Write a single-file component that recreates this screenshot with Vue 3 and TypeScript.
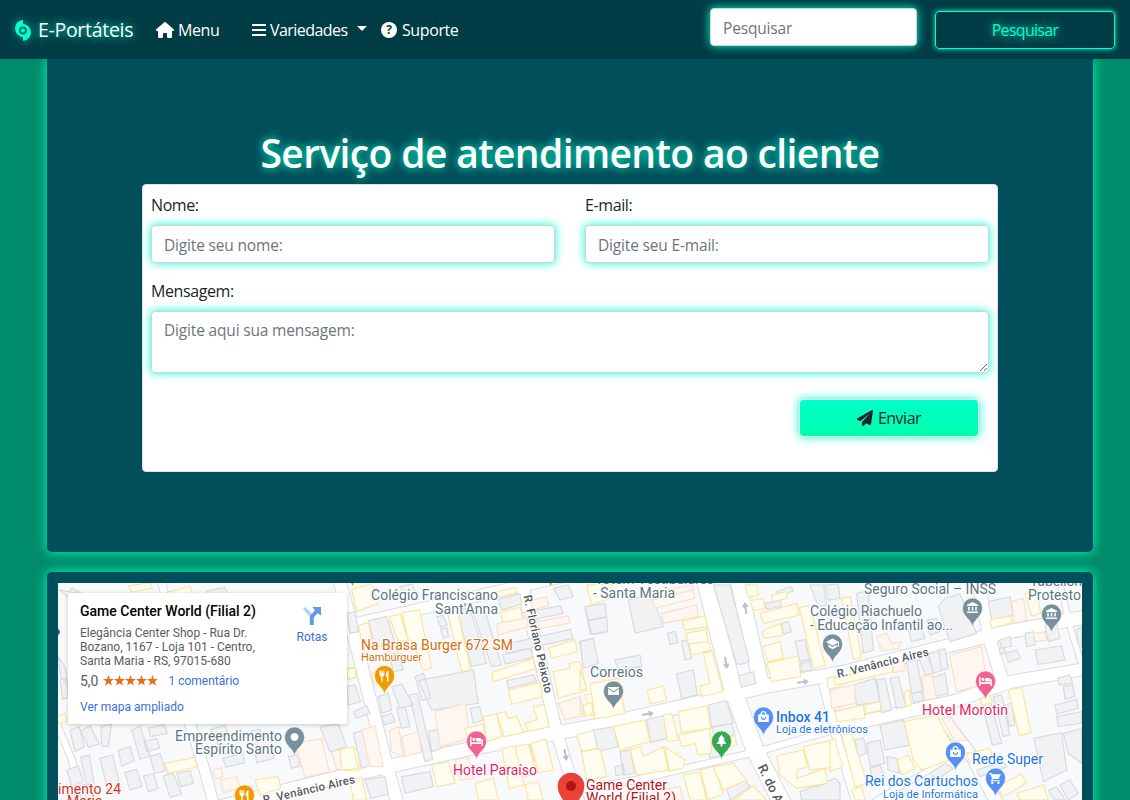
<script setup lang="ts">
interface Shapes { x: number; y: number; yellow: string; gray: string; peach: string }
interface Label { t: string; x: number; y: number; w?: number; c: string; s?: number; b?: number; r?: number }
interface Pin { x: number; y: number; c: string; k: string }

const roads: { d: string; w: number }[] = [
  { d: 'M340 627L517 587L570 575', w: 11 },
  { d: 'M338 575L347 608L387 767L398 805', w: 12 },
  { d: 'M215 808L340 777L473 748L600 725L723 697L767 686L840 673L987 636L1085 617', w: 13 },
  { d: 'M520 575L557 733L571 780L580 805', w: 11 },
  { d: 'M704 575L733 690L755 750L783 805', w: 17 },
  { d: 'M737 575L762 688', w: 15 },
  { d: 'M977 575L990 640L1005 690', w: 12 },
  { d: 'M1085 669L1010 682L958 700L830 729', w: 12 },
  { d: 'M830 731L760 751L640 779L570 792', w: 6 },
  { d: 'M932 703L973 758L998 805', w: 12 },
  { d: 'M823 683L836 735L857 805', w: 8 },
  { d: 'M1058 575L1071 630L1085 675', w: 5 },
  { d: 'M188 718L204 768L214 805', w: 10 },
  { d: 'M944 762L885 795L870 805', w: 5 },
  { d: 'M50 708L72 760L80 805', w: 6 },
  { d: 'M160 575L166 600', w: 7 },
]

const blocks: Shapes[] = [
  {
    x: 40, y: 570,
    yellow: 'M345 78L450 48L458 78L360 92ZM375 580L465 562L472 590L385 610ZM50 440L75 432L80 455L55 462ZM645 630L715 620L722 655L660 675ZM920 295L945 292L948 322L925 328ZM265 48L330 38L338 55L275 66ZM930 545L960 535L960 600L915 602L900 550Z',
    gray: 'M90 480L118 470L133 530L105 545ZM122 482L150 467L178 522L145 532ZM183 470L215 462L205 530L185 528ZM80 600L115 588L130 635L95 650ZM122 562L148 555L162 640L140 645ZM180 565L218 555L242 655L205 668ZM234 542L270 530L283 572L246 588ZM275 480L300 468L330 558L300 568ZM325 474L372 464L382 490L332 500ZM312 515L350 505L360 535L320 545ZM330 560L360 550L377 602L345 610ZM255 608L290 598L307 650L270 660ZM310 618L340 610L355 655L325 665ZM370 618L400 610L425 672L390 682ZM410 610L450 602L460 640L422 650ZM512 478L555 465L565 495L522 505ZM530 510L562 500L575 545L540 555ZM548 565L608 550L615 578L558 592ZM635 482L660 478L665 505L690 500L702 565L650 578ZM745 560L775 555L780 588L755 595ZM840 470L895 462L920 530L870 545ZM500 62L555 52L565 80L510 90ZM60 60L80 80L95 55L135 75ZM60 330L80 325L84 382L68 388ZM55 260L75 290L84 345L62 320ZM920 130L945 125L955 185L930 190ZM110 650L150 640L165 690L125 690Z',
    peach: 'M765 520L845 505L868 605L795 622ZM518 600L545 593L548 620L525 628ZM875 545L920 535L940 600L890 598ZM540 630L590 620L600 655L550 668Z',
  },
  {
    x: 340, y: 570,
    yellow: 'M35 58L95 42L115 100L50 125ZM55 167L85 157L95 205L65 217ZM148 140L180 132L205 210L175 215ZM185 128L238 120L275 295L248 300L218 212L205 210ZM320 118L350 112L392 300L365 305ZM445 72L525 52L530 68L450 88ZM480 127L540 112L550 145L490 157ZM455 308L580 265L585 297L460 335ZM505 360L600 338L607 380L515 403ZM625 235L705 208L712 245L635 265ZM640 305L690 295L688 280L720 275L740 360L655 385ZM735 375L755 370L775 430L755 438ZM430 440L470 432L485 500L440 515ZM470 430L495 425L505 445L530 438L550 488L492 500ZM555 460L592 448L580 410L612 403L628 470L565 485ZM275 585L325 575L345 640L290 650ZM485 535L525 528L552 645L508 655ZM525 530L565 522L590 610L548 622ZM572 520L618 508L640 600L595 608ZM710 495L762 480L775 535L725 545ZM375 475L430 462L435 495L382 505ZM0 540L40 530L55 595L5 600ZM20 300L45 292L48 322L25 328ZM95 310L125 300L130 335L102 342ZM405 640L460 625L475 690L415 690ZM555 645L595 635L610 690L565 690ZM30 630L65 622L80 690L40 690ZM740 570L780 560V610L750 615Z',
    gray: 'M85 152L140 140L190 300L160 305L140 225L105 232ZM350 120L388 113L440 280L395 290ZM395 115L430 108L485 285L455 290ZM290 140L308 136L322 165L302 172ZM302 178L320 173L326 198L310 205ZM475 88L540 72L545 102L485 120ZM540 130L660 108L670 130L550 155ZM490 225L690 178L700 205L500 250ZM488 255L570 235L580 262L495 282ZM500 332L580 315L590 335L505 355ZM225 320L250 310L272 385L245 392ZM208 375L232 370L278 568L255 575ZM155 350L185 342L220 405L180 415ZM170 415L195 410L210 470L185 475ZM390 415L418 410L430 450L400 460ZM115 380L145 370L155 420L125 430ZM125 440L155 430L165 455L135 465ZM40 425L80 407L90 430L50 445ZM40 490L70 480L110 580L65 595ZM735 118L780 105V155L745 162ZM745 165L780 160V190L752 193ZM718 215L755 207L770 275L735 285ZM185 620L270 605L280 650L195 670ZM75 630L135 620L145 672L92 685ZM235 332L400 300L415 400L275 420ZM265 485L295 478L305 535L275 545ZM568 525L605 518L612 565L580 572ZM640 55L685 45L700 80L660 90ZM180 50L215 42L228 68L195 78ZM20 350L45 345L62 395L25 405Z',
    peach: 'M285 425L375 400L392 505L300 530ZM470 162L560 140L565 170L475 195ZM590 155L685 138L690 160L600 175ZM148 482L175 470L190 560L155 545ZM185 500L235 485L245 545L195 560ZM65 480L105 467L130 590L90 590ZM655 400L720 380L735 435L675 450ZM570 92L620 80L625 108L580 118ZM345 570L385 562L400 625L360 630Z',
  },
  {
    x: 580, y: 570,
    yellow: 'M20 45L95 42L100 80L35 105ZM305 155L375 138L383 170L315 180ZM318 190L378 178L385 215L325 222ZM328 222L385 215L392 240L335 255ZM370 250L395 242L430 365L365 380L360 350L390 340ZM202 360L250 348L260 390L210 402ZM30 340L115 325L135 430L45 447ZM540 130L650 100L658 135L550 160ZM545 185L600 160L610 195L555 205ZM548 230L600 215L610 265L565 275ZM560 280L655 258L663 320L575 335ZM495 45L530 45L535 75L505 82ZM510 92L550 85L555 115L520 122ZM575 75L620 65L622 85L580 95ZM658 112L690 108L735 285L700 295ZM100 470L195 450L210 515L120 540ZM250 435L275 430L295 510L262 515ZM295 425L380 408L393 475L305 487ZM295 495L390 475L395 550L355 555L345 520L305 530ZM150 540L180 530L190 560L250 530L265 600L170 615ZM255 530L315 570L310 595L268 603ZM5 545L60 535L80 620L20 630ZM310 615L360 605L380 690L330 690ZM360 600L400 590L430 670L385 690ZM400 590L460 580L500 630L430 660ZM590 558L668 540L685 590L650 600V625L735 595L742 640L650 655L600 615ZM670 530L760 510L775 590L690 600ZM460 690L520 648L560 690ZM0 300L20 355L0 360ZM10 405L35 398L40 430L15 438ZM740 325L780 315V350L745 358ZM450 500L465 497L470 525L450 530Z',
    gray: 'M15 110L75 100L80 140L25 150ZM25 152L80 142L83 185L35 193ZM0 215L40 205L55 280L10 295ZM145 90L215 75L250 170L165 190ZM105 270L180 255L185 290L115 300ZM262 190L285 184L295 218L270 224ZM305 213L322 210L335 265L315 270ZM290 312L340 300L352 375L305 385ZM400 45H450L508 272Q490 285 470 282ZM475 318L520 305L528 340L485 352ZM645 215L675 208L690 275L662 283ZM660 275L690 268L695 300L665 305ZM605 160L625 155L635 185L612 193ZM40 480L100 470L115 530L55 545ZM200 448L250 437L262 505L212 518ZM385 405L440 392L460 460L395 470ZM395 472L455 460L465 495L405 500ZM385 530L415 522L430 555L390 565ZM120 545L150 540L165 610L130 615ZM440 655L495 630L510 650L450 690ZM690 45H730L740 105L715 110ZM735 45L775 42L780 85L745 90ZM555 100L600 92L605 108L560 118ZM105 590L130 585L133 612L108 617ZM590 65L632 50L640 62L600 80ZM660 665L765 625L780 640V690H665ZM703 625L730 615L735 640L712 650Z',
    peach: 'M215 90L340 60L345 85L225 115ZM245 130L350 105L355 140L250 160ZM220 68L335 45L340 60L225 85ZM750 365L780 358V420L768 425ZM0 375L10 430L0 432ZM230 660L300 650L310 690H240Z',
  },
  {
    x: 830, y: 570,
    yellow: 'M35 85L60 80L95 262L70 268ZM480 150L540 138L548 158L485 175ZM15 425L100 405L105 445L20 455ZM105 405L150 395L153 420L108 430ZM222 455L320 435L385 560L275 600L250 570ZM535 360L575 352L603 488L568 497ZM0 510L15 508L38 590L0 605ZM35 495L65 490L110 640L75 650ZM410 550L480 535L488 565L420 580ZM500 650L575 612L588 640L520 680ZM223 365L238 360L245 405L228 408ZM200 572L235 555L255 595L215 615ZM585 70L620 62L632 130L605 138ZM450 385L480 378L488 398L455 405ZM10 325L185 285L190 305L20 345ZM560 670L640 645L655 690H570ZM65 660L95 650L105 690H75Z',
    gray: 'M80 70L115 62L130 240L100 250ZM345 85L390 72L440 190L360 215L325 110ZM475 95L540 80L550 135L485 150ZM508 210L540 200L545 228L515 235ZM525 250L560 240L572 265L535 277ZM508 235L522 232L525 248L510 252ZM585 190L610 185L615 225L590 230ZM645 165L680 160L690 205L655 215ZM615 240L695 228L705 270L625 283ZM70 345L135 325L150 395L80 405ZM140 330L165 325L185 420L155 428ZM180 325L205 320L228 410L200 415ZM230 275L260 270L278 365L245 370ZM265 257L290 250L312 310L285 315ZM295 250L325 243L335 302L310 310ZM325 240L345 236L355 295L335 300ZM300 325L345 310L355 370L315 380ZM245 370L275 363L280 390L252 398ZM150 465L220 450L240 525L165 540ZM75 510L100 503L110 550L85 560ZM110 520L150 510L165 580L120 590ZM170 560L200 565L210 610L175 600ZM455 400L480 390L515 520L487 525ZM490 380L515 375L540 495L520 500ZM525 405L545 400L555 465L538 468ZM612 505L695 488L710 600L640 635ZM700 490L755 475V580L715 550ZM682 325L720 315L728 340L688 345ZM700 350L728 345L735 380L705 388ZM675 405L740 388L745 415L680 432ZM680 440L755 425V460L685 470ZM120 595L150 585L165 625L130 635ZM300 610L345 580L370 595L320 630ZM690 645L720 630L745 670L715 690ZM655 660L680 650L705 690H675ZM740 180L755 170V230L745 225ZM290 150L320 145L330 185L300 195ZM235 180L275 172L285 205L245 215ZM440 600L520 575L530 590L450 620Z',
    peach: 'M358 255L455 230L470 340L380 365ZM140 200L170 190L185 220L215 215L205 235L155 243ZM545 95L580 85L590 150L552 160ZM610 190L645 185L650 210L615 215ZM275 320L305 315L320 385L285 390ZM0 360L75 345L75 400L5 415ZM335 445L360 440L410 510L375 515ZM185 280L220 272L228 300L192 308Z',
  },
]

const slate = '#5b7683'
const labels: Label[] = [
  { t: 'Colégio Franciscano', x: 371, y: 600, w: 127, c: slate },
  { t: "Sant'Anna", x: 435, y: 613.5, w: 63, c: slate },
  { t: 'Totem Vestibulares', x: 595, y: 584, w: 119, c: slate },
  { t: '- Santa Maria', x: 593, y: 598, w: 82, c: slate },
  { t: 'Seguro Social – INSS', x: 864, y: 594, w: 132, c: slate },
  { t: 'Tabelion', x: 1030, y: 586, w: 52, c: slate },
  { t: 'Protesto', x: 1028, y: 600, w: 53, c: slate },
  { t: 'Colégio Riachuelo', x: 810, y: 616, w: 112, c: slate },
  { t: '- Educação Infantil ao...', x: 810, y: 630, w: 143, c: slate },
  { t: 'Correios', x: 590, y: 677, w: 53, c: slate },
  { t: 'Empreendimento', x: 175, y: 740.5, w: 107, c: slate },
  { t: 'Espírito Santo', x: 195, y: 754, w: 87, c: slate },
  { t: 'Na Brasa Burger 672 SM', x: 361, y: 650, w: 152, c: '#d56e0c' },
  { t: 'Hambúrguer', x: 361, y: 661, w: 61, c: '#d56e0c', s: 11 },
  { t: 'Hotel Paraíso', x: 453, y: 775, w: 84, c: '#e91e63' },
  { t: 'Hotel Morotin', x: 922, y: 715, w: 86, c: '#e91e63' },
  { t: 'Inbox 41', x: 776, y: 722, w: 54, c: '#1a73e8', b: 500 },
  { t: 'Loja de eletrônicos', x: 776, y: 733, w: 92, c: '#1a73e8', s: 11 },
  { t: 'Rede Super', x: 972, y: 764, w: 71, c: '#1a73e8' },
  { t: 'Rei dos Cartuchos', x: 865, y: 786, w: 113, c: '#1a73e8' },
  { t: 'Loja de Informática', x: 883, y: 797.5, w: 95, c: '#1a73e8', s: 11 },
  { t: 'Game Center', x: 586, y: 790, w: 81, c: '#b31412' },
  { t: 'World (Filial 2)', x: 586, y: 803, w: 90, c: '#b31412' },
  { t: 'imento 24', x: 58, y: 794, w: 63, c: '#d93025' },
  { t: 'Maria', x: 67, y: 806, c: '#d93025' },
  { t: 'R. Venâncio Aires', x: 838, y: 678, w: 94, c: '#52575c', s: 11.5, b: 500, r: -14 },
  { t: 'R. Venâncio Aires', x: 264, y: 804, w: 94, c: '#52575c', s: 11.5, b: 500, r: -13 },
  { t: 'R. Floriano Peixoto', x: 523.5, y: 596, w: 100, c: '#52575c', s: 11.5, b: 500, r: 77.6 },
  { t: 'R. do Acampamento', x: 757.5, y: 767, c: '#52575c', s: 13, b: 500, r: 64 },
]

const pins: Pin[] = [
  { x: 294.5, y: 737, c: '#78909c', k: 'dot' },
  { x: 384.5, y: 675.5, c: '#f29900', k: 'food' },
  { x: 244.5, y: 795, c: '#f29900', k: 'food' },
  { x: 476.5, y: 741, c: '#f06292', k: 'bed' },
  { x: 985.5, y: 681, c: '#f06292', k: 'bed' },
  { x: 613.5, y: 691, c: '#78909c', k: 'mail' },
  { x: 721.5, y: 741, c: '#34a853', k: 'tree' },
  { x: 763.5, y: 717, c: '#5491f5', k: 'bag' },
  { x: 955.5, y: 752, c: '#5491f5', k: 'bag' },
  { x: 995.5, y: 778, c: '#5491f5', k: 'cart' },
  { x: 832.5, y: 644, c: '#78909c', k: 'school' },
  { x: 972.5, y: 608, c: '#78909c', k: 'bank' },
  { x: 1051.5, y: 614, c: '#78909c', k: 'bank' },
]

const glyphs: Record<string, string> = {
  dot: 'M0 -4A4 4 0 1 0 .01 -4Z',
  food: 'M-5 -5V-1Q-5 1 -3.4 1V6H-1.9V1Q-.2 1 -.2 -1V-5H-1V-2H-1.7V-5H-3V-2H-3.7V-5ZM4 -5Q1.2 -4 1.2 1H2.4V6H4Z',
  bed: 'M-6.3 -4.2H-5V1.3H5V-1.8H6.3V5H5V3H-5V5H-6.3ZM-4.2 -1.7A1.6 1.6 0 1 1 -1 -1.7A1.6 1.6 0 1 1 -4.2 -1.7M-.3 -3H3.4Q4.8 -3 4.8 -1.3V.6H-.3Z',
  mail: 'M-5.5 -3.3L0 .3L5.5 -3.3V-4H-5.5ZM-5.5 -2.2V4H5.5V-2.2L0 1.5Z',
  tree: 'M0 -6.5L3.5 -1.5H2L5 3H.9V5.5H-.9V3H-5L-2 -1.5H-3.5Z',
  bag: 'M-5.3 -2.5H-3Q-3 -6 0 -6Q3 -6 3 -2.5H5.3V5H-5.3ZM-1.8 -2.5H1.8Q1.8 -4.7 0 -4.7Q-1.8 -4.7 -1.8 -2.5ZM-2.8 0Q-2.5 3 0 3Q2.5 3 2.8 0H1.6Q1.5 1.7 0 1.7Q-1.5 1.7 -1.6 0Z',
  cart: 'M-6.5 -5H-4L-3.4 -3.8H5.5L3 1H-2.5L-3.1 2.2H4.3V3.3H-4.7L-3.5 .4L-5 -3.8H-6.5ZM-3.2 3.6A1.2 1.2 0 1 0 -3.19 3.6ZM3 3.6A1.2 1.2 0 1 0 3.01 3.6Z',
  school: 'M0 -5.5L6.5 -2V3H5.3V-1.2L0 1.8L-6.5 -2ZM-4.2 .6L0 3L4.2 .6V2.9L0 5.3L-4.2 2.9Z',
  bank: 'M0 -6L5.5 -3.2V-2H-5.5V-3.2ZM-4.3 -1.2H-2.7V2.6H-4.3ZM-.8 -1.2H.8V2.6H-.8ZM2.7 -1.2H4.3V2.6H2.7ZM-5.5 3.6H5.5V5H-5.5Z',
}

const arrows = [
  { x: 745.5, y: 608, r: -8 },
  { x: 726, y: 663, r: 170 },
  { x: 648, y: 714, r: 80 },
  { x: 803, y: 682, r: 83 },
  { x: 565.5, y: 755, r: 170 },
]
</script>

<template>
  <div class="page">
    <nav class="navbar">
      <a class="brand">
        <svg class="storm" viewBox="0 0 384 512"><path fill-rule="evenodd" d="M0 208C0 104.4 75.7 18.5 174.9 2.6C184 1.2 192 8.6 192 17.9V81.2c0 8.4 6.5 15.3 14.7 16.5C307 112.5 384 199 384 303.4c0 103.6-75.7 189.5-174.9 205.4c-9.2 1.5-17.1-5.9-17.1-15.2V430.2c0-8.4-6.5-15.3-14.7-16.5C77 398.9 0 312.4 0 208zm288 48A96 96 0 1 0 96 256a96 96 0 1 0 192 0zm-96-48a48 48 0 1 1 0 96 48 48 0 1 1 0-96z" /></svg>
        <span>E-Portáteis</span>
      </a>
      <a class="link home">
        <svg viewBox="0 0 576 512" width="18" height="16"><path d="M575.8 255.5c0 18-15 32.1-32 32.1h-32l.7 160.2c0 2.700-.2 5.400-.5 8.100V472c0 22.100-17.900 40-40 40H392c-22.100 0-40-17.900-40-40V384c0-17.700-14.300-32-32-32H256c-17.700 0-32 14.300-32 32v88c0 22.100-17.900 40-40 40H104c-22.100 0-40-17.900-40-40V287.600H32c-18 0-32-14-32-32.100c0-9 3-17 10-24L266.400 8c7-7 15-8 22-8s15 2 21 7L564.800 231.500c8 7 12 15 11 24z" /></svg>
        <span>Menu</span>
      </a>
      <a class="link variety">
        <svg viewBox="0 0 14 14" width="14" height="14"><path d="M0 1H14V3H0ZM0 6H14V8H0ZM0 11H14V13H0Z" /></svg>
        <span>Variedades</span><i class="caret"></i>
      </a>
      <a class="link help">
        <svg viewBox="0 0 16 16" width="16" height="16"><circle cx="8" cy="8" r="8" /><text x="8" y="12.200" class="mark">?</text></svg>
        <span>Suporte</span>
      </a>
      <form class="search" @submit.prevent>
        <input class="field search-field" placeholder="Pesquisar">
        <button class="search-btn">Pesquisar</button>
      </form>
    </nav>

    <main>
      <section class="panel contact">
        <h1>Serviço de atendimento ao cliente</h1>
        <form class="card" @submit.prevent>
          <div class="row">
            <label><span>Nome:</span><input class="field" placeholder="Digite seu nome:"></label>
            <label><span>E-mail:</span><input class="field" placeholder="Digite seu E-mail:"></label>
          </div>
          <label class="message"><span>Mensagem:</span><textarea class="field" rows="2" placeholder="Digite aqui sua mensagem:"></textarea></label>
          <button class="send">
            <svg viewBox="0 0 512 512" width="16" height="16"><path d="M498.100 5.600c10.100 7 15.400 19.100 13.500 31.200l-64 416c-1.500 9.700-7.400 18.200-16 23s-18.900 5.400-28 1.600L284 427.700l-68.500 74.100c-8.900 9.700-22.900 12.900-35.200 8.100S160 493.200 160 480V396.400c0-4 1.500-7.800 4.200-10.700L410 110L106 360.800 17.700 316.600C7.100 311.300.3 300.700 0 288.900s5.900-22.800 16.100-28.700l448-256c10.700-6.100 23.900-5.500 34 1.400z" /></svg>
            <span>Enviar</span>
          </button>
        </form>
      </section>

      <section class="panel place">
        <div class="map">
          <svg class="canvas" viewBox="58 583 1024 217" width="1024" height="217">
            <rect x="58" y="583" width="1024" height="217" fill="#f8f9fb" />
            <g fill="none" stroke="#d9dbe1" stroke-linejoin="round">
              <path v-for="(r, i) in roads" :key="i" :d="r.d" :stroke-width="r.w + 2" />
            </g>
            <g fill="none" stroke="#fff" stroke-linejoin="round">
              <path v-for="(r, i) in roads" :key="i" :d="r.d" :stroke-width="r.w" />
            </g>
            <g v-for="(b, i) in blocks" :key="i" :transform="`translate(${b.x} ${b.y}) scale(.33333)`" stroke-width="3.5">
              <path :d="b.gray" fill="#f1f2f4" stroke="#d8dade" />
              <path :d="b.peach" fill="#fef6f0" stroke="#fbdfc8" />
              <path :d="b.yellow" fill="#fffcf0" stroke="#fde4a0" />
            </g>
            <path v-for="(a, i) in arrows" :key="i" d="M0 -6L3.500 -1H1V6H-1V-1H-3.500Z" fill="#b9bdd0" :transform="`translate(${a.x} ${a.y}) rotate(${a.r})`" />
            <circle cx="57" cy="632" r="3" fill="#455a64" />
            <path d="M351 583H354L352.500 586ZM549 583H552L550.500 586Z" fill="#f29900" />
            <g class="labels">
              <text v-for="(l, i) in labels" :key="i" :transform="`translate(${l.x} ${l.y}) rotate(${l.r || 0})`" :fill="l.c" :font-size="l.s || 14" :font-weight="l.b || 400" :textLength="l.w">{{ l.t }}</text>
            </g>
            <g v-for="(p, i) in pins" :key="i" :transform="`translate(${p.x} ${p.y})`">
              <path d="M0 19C-1 11 -10 9 -10 0A10 10 0 1 1 10 0C10 9 1 11 0 19Z" :fill="p.c" stroke="#fff" stroke-width=".5" />
              <path :d="glyphs[p.k]" fill="#fff" fill-rule="evenodd" />
            </g>
            <path d="M571 820C570 803 558 798 558 786A13 13 0 1 1 584 786C584 798 572 803 571 820Z" fill="#ea4335" stroke="#c5221f" stroke-width=".5" />
            <circle cx="571" cy="786" r="5" fill="#b31412" />
          </svg>
          <aside class="info">
            <div class="details">
              <h2>Game Center World (Filial 2)</h2>
              <p class="address">Elegância Center Shop - Rua Dr.<br>Bozano, 1167 - Loja 101 - Centro,<br>Santa Maria - RS, 97015-680</p>
              <div class="rating">
                <span>5,0</span>
                <svg viewBox="0 0 55 11" width="55" height="11"><path v-for="n in 5" :key="n" :transform="`translate(${(n - 1) * 11} 0)`" d="M5.500 0L6.900 3.900L11 4L7.800 6.500L8.900 10.500L5.500 8.200L2.100 10.500L3.200 6.500L0 4L4.100 3.900Z" fill="#e7711b" /></svg>
                <a>1 comentário</a>
              </div>
              <a class="bigger">Ver mapa ampliado</a>
            </div>
            <div class="routes">
              <svg viewBox="0 0 18 18" width="18" height="18"><path d="M0 2L2 0L9.500 7L7 10Z" fill="#b3d1f7" /><path d="M6.800 18V11Q7 8.500 9 6.700L12 3.500L9.500 0H18V8.500L14.700 6.200L11.500 9.400Q10.800 10.200 10.800 11.500V18Z" fill="#5c9ce6" /></svg>
              <a>Rotas</a>
            </div>
          </aside>
        </div>
      </section>
    </main>
  </div>
</template>

<style>
html, body { margin: 0; overflow: hidden; background: #008c6b; }
</style>

<style scoped>
* { box-sizing: border-box; }
.page { height: 800px; overflow: hidden; background: #008c6b; font: 16px/24px "Open Sans", "Noto Sans", sans-serif; color: #212529; }
.navbar { position: relative; z-index: 2; display: flex; height: 59px; padding: 0 15px; background: #003c46; color: #fff; }
.navbar a { display: flex; align-items: center; height: 60px; }
.navbar svg { fill: currentColor; flex: none; }
.brand { width: 141px; gap: 7px; font-size: 19.5px; letter-spacing: -.3px; text-shadow: 0 0 10px #00ffcc; white-space: nowrap; }
.brand .storm { width: 16px; height: 21px; color: #00ffcc; filter: drop-shadow(0 0 5px rgba(0, 255, 204, .6)); }
.link { gap: 4px; letter-spacing: -.4px; white-space: nowrap; }
.home { width: 96px; }
.variety { width: 129px; letter-spacing: -.55px; }
.help { gap: 5px; }
.caret { margin-left: 5px; margin-top: -3px; border: solid transparent; border-width: 5px 5px 0; border-top-color: #fff; }
.mark { fill: #003c46; font: 700 12px "Open Sans", sans-serif; text-anchor: middle; }
.search { display: flex; margin-left: auto; gap: 18px; padding-top: 8px; }
.field { display: block; width: 100%; height: 38px; padding: 7px 12px 5px; border: 1px solid #ced4da; border-radius: 4px; outline: 0; background: #fff; color: #495057; font: inherit; font-size: 15.5px; letter-spacing: -.17px; box-shadow: 0 0 10px #00ffcc; }
.field::placeholder { color: #6c757d; opacity: 1; }
.search-field { width: 207px; }
.search-btn { width: 180px; height: 38px; margin-top: 3px; padding: 0; border: 1px solid #00ffcc; border-radius: 4px; background: transparent; color: #00ffcc; font: inherit; letter-spacing: -.7px; text-shadow: 0 0 10px #00ffcc; box-shadow: 0 0 5px #00ffcc; }
main { display: flex; flex-direction: column; gap: 20px; margin: 0 37px 0 47px; }
.panel { background: #004f5a; box-shadow: 0 0 12px #00ffbe; border-radius: 5px; }
.contact { height: 493px; padding: 70px 95px 0; border-radius: 0 0 5px 5px; }
h1 { margin: 0 0 7px; height: 48px; font-size: 39px; line-height: 48px; font-weight: 600; letter-spacing: -.63px; text-align: center; color: #fff; text-shadow: 0 0 10px #00ffcc; white-space: nowrap; }
.card { display: flex; flex-direction: column; height: 288px; padding: 8px; border: 1px solid #dfdfdf; border-radius: 4px; background: #fff; }
.row { display: grid; grid-template-columns: 1fr 1fr; gap: 30px; }
label > span { display: block; margin-bottom: 8px; letter-spacing: -.4px; }
.message { margin-top: 16px; }
textarea.field { height: 62px; padding: 6px 12px; resize: both; }
.send { display: flex; align-items: center; justify-content: center; gap: 5px; align-self: flex-end; width: 180px; height: 38px; margin: 26px 10px 0 0; padding: 0; border: 1px solid #f8f9fa; border-radius: 4px; background: linear-gradient(#00ffcc, #00ffaa); color: #212529; fill: #212529; font: inherit; letter-spacing: -.5px; box-shadow: 0 0 10px #00ffcc; }
.place { height: 300px; padding: 11px; }
.map { position: relative; height: 217px; font-family: Roboto, sans-serif; }
.canvas { display: block; }
.labels { font-family: Roboto, sans-serif; paint-order: stroke; stroke: #fff; stroke-width: 2px; stroke-linejoin: round; }
.info { position: absolute; left: 10px; top: 10px; display: flex; width: 279px; height: 131px; padding: 10px 0 10px 12px; border-radius: 2px; background: #fff; box-shadow: 0 1px 4px rgba(0, 0, 0, .2); font-size: 12px; line-height: 14px; color: #5b5b5b; }
.details { flex: none; width: 193px; }
h2 { margin: 0 0 6px; font-size: 14px; line-height: 17px; font-weight: 500; color: #000; white-space: nowrap; }
.address { margin: 0; white-space: nowrap; }
.rating { display: flex; align-items: center; height: 24px; margin-top: 1px; font-size: 14px; }
.rating svg { margin: -1px 11px 0 4px; }
.rating a { font-size: 12px; }
.info a { color: #3a6fe0; }
.bigger { display: block; margin-top: 7px; }
.routes { display: flex; flex: none; flex-direction: column; align-items: center; width: 78px; padding-top: 4px; gap: 5px; }
</style>
